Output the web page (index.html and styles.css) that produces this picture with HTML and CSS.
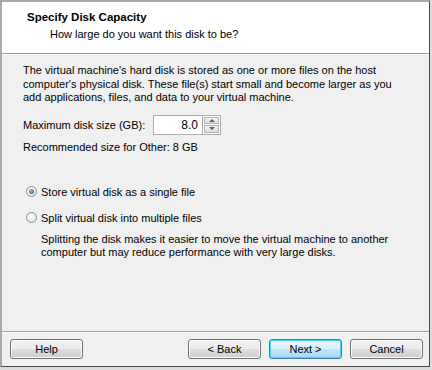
FILE: index.html
```html
<!DOCTYPE html>
<html>
<head>
<meta charset="utf-8">
<link rel="stylesheet" href="styles.css">
</head>
<body>
<div class="frame">
  <div class="win">
    <div class="header">
      <div class="title">Specify Disk Capacity</div>
      <div class="subtitle">How large do you want this disk to be?</div>
    </div>
    <div class="body">
      <p class="intro">The virtual machine's hard disk is stored as one or more files on the host computer's physical disk. These file(s) start small and become larger as you add applications, files, and data to your virtual machine.</p>
      <div class="sizerow">
        <span class="label">Maximum disk size (GB):</span>
        <div class="spin">
          <div class="spin-input">8.0</div>
          <div class="spin-btns">
            <div class="sb up"><span class="tri-up"></span></div>
            <div class="sb down"><span class="tri-down"></span></div>
          </div>
        </div>
      </div>
      <div class="rec">Recommended size for Other: 8 GB</div>
      <div class="radio r1"><span class="rb on"></span><span>Store virtual disk as a single file</span></div>
      <div class="radio r2"><span class="rb"></span><span>Split virtual disk into multiple files</span></div>
      <p class="desc">Splitting the disk makes it easier to move the virtual machine to another computer but may reduce performance with very large disks.</p>
    </div>
    <div class="footer">
      <button class="btn">Help</button>
      <div class="spacer"></div>
      <button class="btn">&lt; Back</button>
      <button class="btn default">Next &gt;</button>
      <button class="btn">Cancel</button>
    </div>
  </div>
</div>
</body>
</html>
```

FILE: styles.css
```css
html, body { margin: 0; padding: 0; }
body {
  font-family: "Liberation Sans", Arial, sans-serif;
  font-size: 11px;
  color: #000;
  background: #e4e4e4;
}
.frame {
  width: 432px;
  height: 370px;
  box-sizing: border-box;
  padding: 0 2px 3px 0;
  background: #dcdcdc;
}
.win {
  height: 100%;
  box-sizing: border-box;
  border-top: 2px solid #a9a9a9;
  border-left: 2px solid #a9a9a9;
  border-right: 1px solid #4a4a4a;
  border-bottom: 1px solid #4a4a4a;
  background: #f0f0f0;
  display: flex;
  flex-direction: column;
}
.header {
  background: #fff;
  height: 52px;
  box-sizing: border-box;
  border-bottom: 1px solid #a0a0a0;
  box-shadow: 0 1px 0 #fff;
  padding: 8px 0 0 25px;
}
.title {
  font-weight: bold;
  font-size: 11.5px;
  line-height: 14px;
}
.subtitle {
  padding-left: 23px;
  line-height: 14px;
  margin-top: 3px;
}
.body {
  flex: 1;
  padding: 10px 0 0 21px;
}
.intro {
  margin: 0;
  width: 380px;
  line-height: 13.5px;
}
.sizerow {
  display: flex;
  align-items: center;
  margin-top: 10px;
  height: 20px;
}
.label { width: 130px; }
.spin { display: flex; height: 20px; }
.spin-input {
  width: 50px;
  box-sizing: border-box;
  border: 1px solid #abadb3;
  background: #fff;
  text-align: right;
  padding-right: 4px;
  line-height: 18px;
  font-size: 12px;
}
.spin-btns {
  display: flex;
  flex-direction: column;
  width: 18px;
  border: 1px solid #abadb3;
  border-left: 0;
  box-sizing: border-box;
  background: #fff;
  padding: 1px;
  gap: 1px;
}
.sb {
  flex: 1;
  background: linear-gradient(#f3f3f3, #dcdcdc);
  border: 1px solid #b4b4b4;
  display: flex;
  align-items: center;
  justify-content: center;
}
.tri-up {
  width: 0; height: 0;
  border-left: 3px solid transparent;
  border-right: 3px solid transparent;
  border-bottom: 3px solid #4a5f8c;
}
.tri-down {
  width: 0; height: 0;
  border-left: 3px solid transparent;
  border-right: 3px solid transparent;
  border-top: 3px solid #4a5f8c;
}
.rec {
  margin-top: 5px;
  line-height: 14px;
}
.radio {
  display: flex;
  align-items: center;
  gap: 4px;
  padding-left: 3px;
  line-height: 14px;
}
.r1 { margin-top: 31px; }
.r2 { margin-top: 12px; }
.rb {
  width: 11px;
  height: 11px;
  box-sizing: border-box;
  border-radius: 50%;
  border: 1px solid #8e8f8f;
  background: radial-gradient(circle at 40% 35%, #fff, #dcdcdc);
  position: relative;
}
.rb.on::after {
  content: "";
  position: absolute;
  left: 2px; top: 2px;
  width: 5px; height: 5px;
  border-radius: 50%;
  background: radial-gradient(circle at 40% 35%, #7fc1f3, #1a4f8f);
}
.desc {
  margin: 8px 0 0 18px;
  width: 350px;
  line-height: 13.5px;
}
.footer {
  height: 35px;
  border-top: 1px solid #a0a0a0;
  box-shadow: inset 0 1px 0 #fff;
  display: flex;
  align-items: flex-start;
  padding: 7px 6px 0 8px;
  box-sizing: border-box;
  gap: 8px;
}
.spacer { flex: 1; }
.btn {
  width: 73px;
  height: 20px;
  font-family: inherit;
  font-size: 11px;
  color: #000;
  border: 1px solid #707070;
  border-radius: 3px;
  background: linear-gradient(#f2f2f2 0%, #ebebeb 50%, #dddddd 51%, #cfcfcf 100%);
  box-shadow: inset 0 0 0 1px #fcfcfc;
  padding: 0;
}
.btn.default {
  border-color: #3c7fb1;
  background: linear-gradient(#eaf6fd 0%, #d9f0fc 50%, #bee6fd 51%, #a7d9f5 100%);
  box-shadow: inset 0 0 0 1px #48d6f8;
}
```
